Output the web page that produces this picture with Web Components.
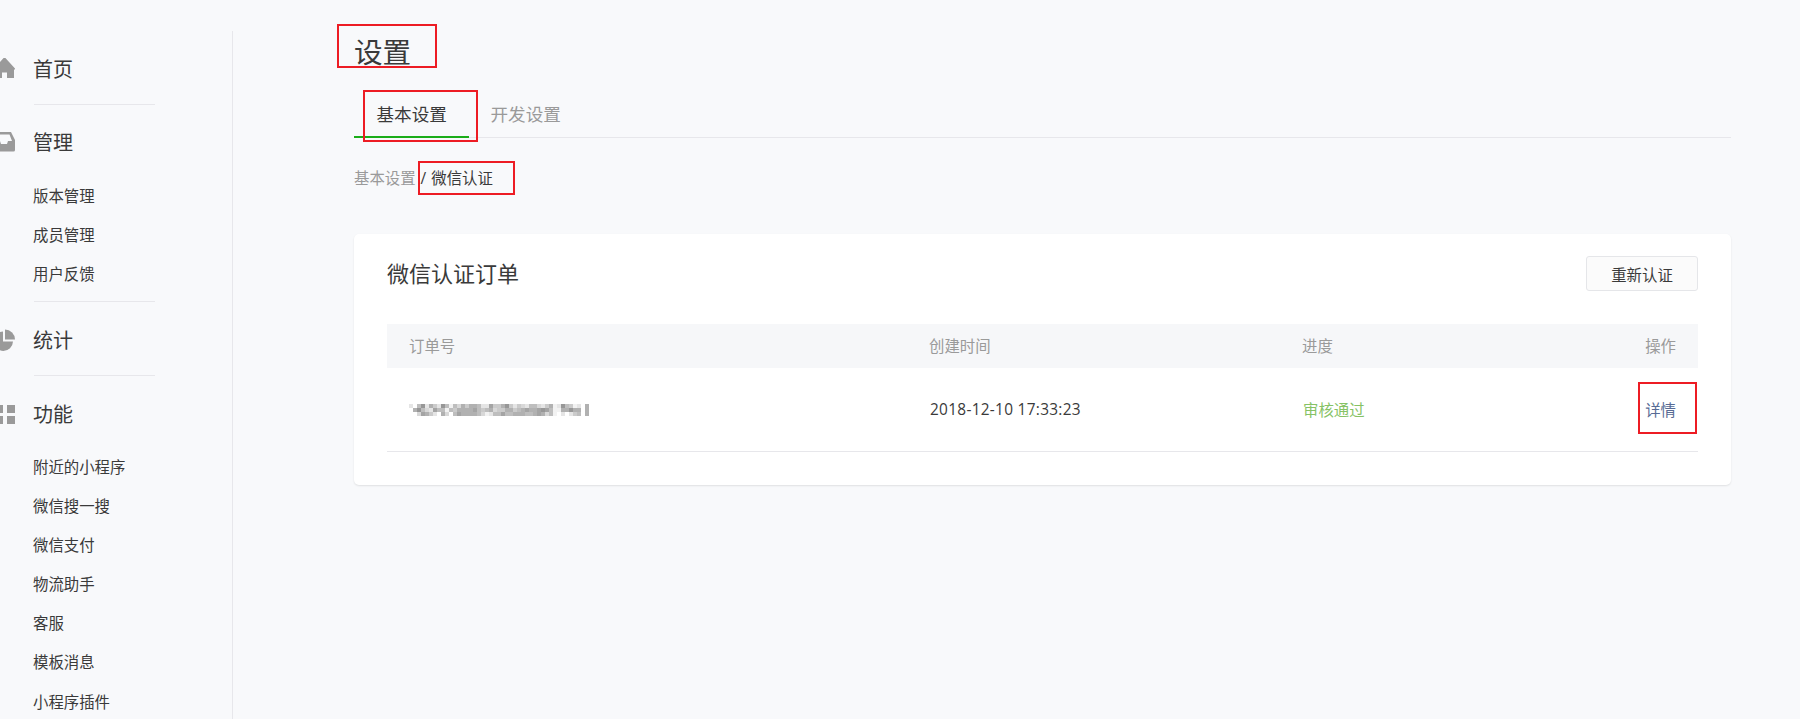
<!DOCTYPE html>
<html lang="zh-CN">
<head>
<meta charset="utf-8">
<title>设置</title>
<style>
html,body{margin:0;padding:0;height:100%;overflow:hidden;background:#f8f9fb}
body{font-family:"Noto Sans CJK SC",sans-serif;color:#3a3a3a}
</style>
</head>
<body>
<app-page>
  <app-sidebar slot="side">
    <nav-group label="首页" divider>
      <svg slot="icon" viewBox="0 1 22 22"><path fill="#9a9a9a" d="M11.500 0L23 12.500H21V21H14V15.500H9V21H2V12.500H0Z"/></svg>
    </nav-group>
    <nav-group label="管理" divider>
      <svg slot="icon" viewBox="0 -1 22 22"><path fill="#9a9a9a" fill-rule="evenodd" d="M0 0H18L22 8V18Q22 19.500 20.500 19.500H0ZM2 2.500V9H7L8 12H14L15 9H19L16.500 2.500Z"/></svg>
      <nav-link>版本管理</nav-link><nav-link>成员管理</nav-link><nav-link>用户反馈</nav-link>
    </nav-group>
    <nav-group label="统计" divider>
      <svg slot="icon" viewBox="0 -1 22 22"><path fill="#9a9a9a" d="M12 -.500A10 10 0 0 1 22 9.500H12Z"/><path fill="#9a9a9a" d="M10 1.500A9.700 9.700 0 1 0 20 11.500H10Z"/></svg>
    </nav-group>
    <nav-group label="功能">
      <svg slot="icon" viewBox="0 -1 22 22"><path fill="#9a9a9a" d="M2 1h8v8H2zM14 1h8v8h-8zM2 12h8v8H2zM14 12h8v8h-8z"/></svg>
      <nav-link>附近的小程序</nav-link><nav-link>微信搜一搜</nav-link><nav-link>微信支付</nav-link><nav-link>物流助手</nav-link><nav-link>客服</nav-link><nav-link>模板消息</nav-link><nav-link>小程序插件</nav-link>
    </nav-group>
  </app-sidebar>
  <page-title>设置</page-title>
  <tab-bar>
    <tab-item active>基本设置</tab-item>
    <tab-item>开发设置</tab-item>
  </tab-bar>
  <bread-crumb parent="基本设置" current="微信认证"></bread-crumb>
  <order-card heading="微信认证订单" action="重新认证">
    <order-head></order-head>
    <order-row></order-row>
  </order-card>
  <mark-box style="left:337px;top:24px;width:100px;height:44px"></mark-box>
  <mark-box style="left:363px;top:90px;width:115px;height:52px"></mark-box>
  <mark-box style="left:418px;top:161px;width:97px;height:34px"></mark-box>
  <mark-box style="left:1638px;top:382px;width:59px;height:52px"></mark-box>
</app-page>
<script>
function def(name, css, html, init){
  customElements.define(name, class extends HTMLElement{
    connectedCallback(){
      if(this.shadowRoot) return;
      const r=this.attachShadow({mode:'open'});
      r.innerHTML='<style>'+css+'</style>'+(typeof html==='function'?html(this):html);
      if(init) init(r,this);
    }
  });
}
def('app-page',
 `:host{display:flex;position:relative;width:1800px;height:719px;overflow:hidden}
  .side{flex:0 0 233px}
  .main{flex:0 0 1377px;margin-left:121px;padding-top:30px}`,
 `<div class="side"><slot name="side"></slot></div><div class="main"><slot></slot></div>`);
def('app-sidebar',
 `:host{display:block;box-sizing:border-box;width:233px;height:688px;margin-top:31px;padding:16px 0 0 33px;border-right:1px solid #e7e7eb}`,
 `<slot></slot>`);
def('nav-group',
 `:host{display:block;width:122px}
  .t{display:flex;align-items:center;height:44px;font-size:20px;line-height:44px;color:#3a3a3a;white-space:nowrap}
  ::slotted(svg){flex:none;width:22px;height:22px;margin:0 18px 0 -40px;}
  .sub{margin-top:12px}
  .sub.empty{display:none}
  :host([divider]) .d{height:1px;background:#e7e7eb;margin-left:1px}
  :host([label="首页"]) .d{margin-top:13px;margin-bottom:15px}
  :host([label="管理"]) .d{margin-top:7.700px;margin-bottom:16px}
  :host([label="统计"]) .d{margin-top:13px;margin-bottom:16px}
  :host([label="功能"]) .sub{margin-top:11px}`,
 h=>`<div class="t"><slot name="icon"></slot><span>${h.getAttribute('label')}</span></div><div class="sub"><slot></slot></div><div class="d"></div>`,
 (r,h)=>{ if(!h.querySelector('nav-link')) r.querySelector('.sub').classList.add('empty'); });
def('nav-link',
 `:host{display:block;height:39.100px;line-height:39px;font-size:15.4px;color:#3a3a3a;white-space:nowrap}`,
 `<slot></slot>`);
def('page-title',
 `:host{display:block;height:44px;line-height:42px;font-size:28.6px;font-weight:400;color:#3a3a3a}`,
 `<slot></slot>`);
def('tab-bar',
 `:host{display:flex;height:63px;border-bottom:1px solid #e7e7eb}`,
 `<slot></slot>`);
def('tab-item',
 `:host{display:block;box-sizing:border-box;width:115px;height:64px;padding:19px 0 0 21.500px;line-height:41px;font-size:17.6px;color:#9a9a9a;white-space:nowrap}
  :host([active]){padding-left:22.500px;color:#3a3a3a;border-bottom:2px solid #1aad19}`,
 `<slot></slot>`);
def('bread-crumb',
 `:host{display:block;margin-top:25px;height:30px;line-height:28px;font-size:15.4px;color:#9a9a9a;white-space:nowrap}
  b{font-weight:400;color:#3a3a3a}
  i{font-style:normal;color:#3a3a3a;font-family:"Open Sans",sans-serif;margin:0 5px}`,
 h=>`<span>${h.getAttribute('parent')}</span><i>/</i><b>${h.getAttribute('current')}</b>`);
def('order-card',
 `:host{display:block;box-sizing:border-box;margin-top:41px;height:251px;padding:22px 33px 33px;background:#fff;border-radius:5px;box-shadow:0 1px 2px rgba(0,0,0,.1)}
  .h{display:flex;justify-content:space-between;align-items:flex-start;height:36px;margin-bottom:32px}
  h2{margin:0;font-size:22px;font-weight:400;line-height:32px;color:#3a3a3a}
  button{box-sizing:border-box;width:112px;height:35px;padding:1px 0 0;font:15.4px/31px "Noto Sans CJK SC",sans-serif;color:#3a3a3a;background:#fbfbfb;border:1px solid #e5e6e9;border-radius:3px}`,
 h=>`<div class="h"><h2>${h.getAttribute('heading')}</h2><button>${h.getAttribute('action')}</button></div><slot></slot>`);
const grid=`display:grid;padding:0 22px 0 22px;`;
def('order-head',
 `:host{${grid}grid-template-columns:520px 373px 1fr 80px;height:44px;line-height:42px;font-size:15.4px;color:#9a9a9a;background:#f6f7f9}
  div{white-space:nowrap} .r{text-align:right}`,
 `<div>订单号</div><div>创建时间</div><div>进度</div><div class="r">操作</div>`);
def('order-row',
 `:host{${grid}grid-template-columns:521px 373px 1fr 80px;height:83px;align-items:center;line-height:83px;font-size:15.4px;color:#3a3a3a;border-bottom:1px solid #e7e7eb}
  .d{font-family:"Open Sans","Noto Sans CJK SC",sans-serif;letter-spacing:.3px}
  .ok{color:#86c265}
  .r{text-align:right;color:#576b95}`,
 `<div><blur-mosaic></blur-mosaic></div><div class="d">2018-12-10 17:33:23</div><div class="ok">审核通过</div><div class="r">详情</div>`);
def('blur-mosaic',
 `:host{display:block;width:180px;height:12px;margin-left:0;margin-top:1px} svg{display:block}`,
 `<svg width="180" height="12" viewBox="0 0 180 12" shape-rendering="crispEdges"></svg>`,
 (r)=>{
  const rows=['205826428515364665227446842432553246128541206','068532755154666675456344664567667875116686606','003764206305766665312557556665567635102024506'];
  let s='';
  rows.forEach((row,y)=>{[...row].forEach((c,x)=>{
    const v=255-(+c)*13;
    s+=`<rect x="${x*4}" y="${y*4}" width="4" height="4" fill="rgb(${v},${v},${v})"/>`;
  });});
  r.querySelector('svg').innerHTML=s;
 });
def('mark-box',
 `:host{display:block;box-sizing:border-box;position:absolute;border:2px solid #ed1c24;pointer-events:none}`,
 ``);
</script>
</body>
</html>
